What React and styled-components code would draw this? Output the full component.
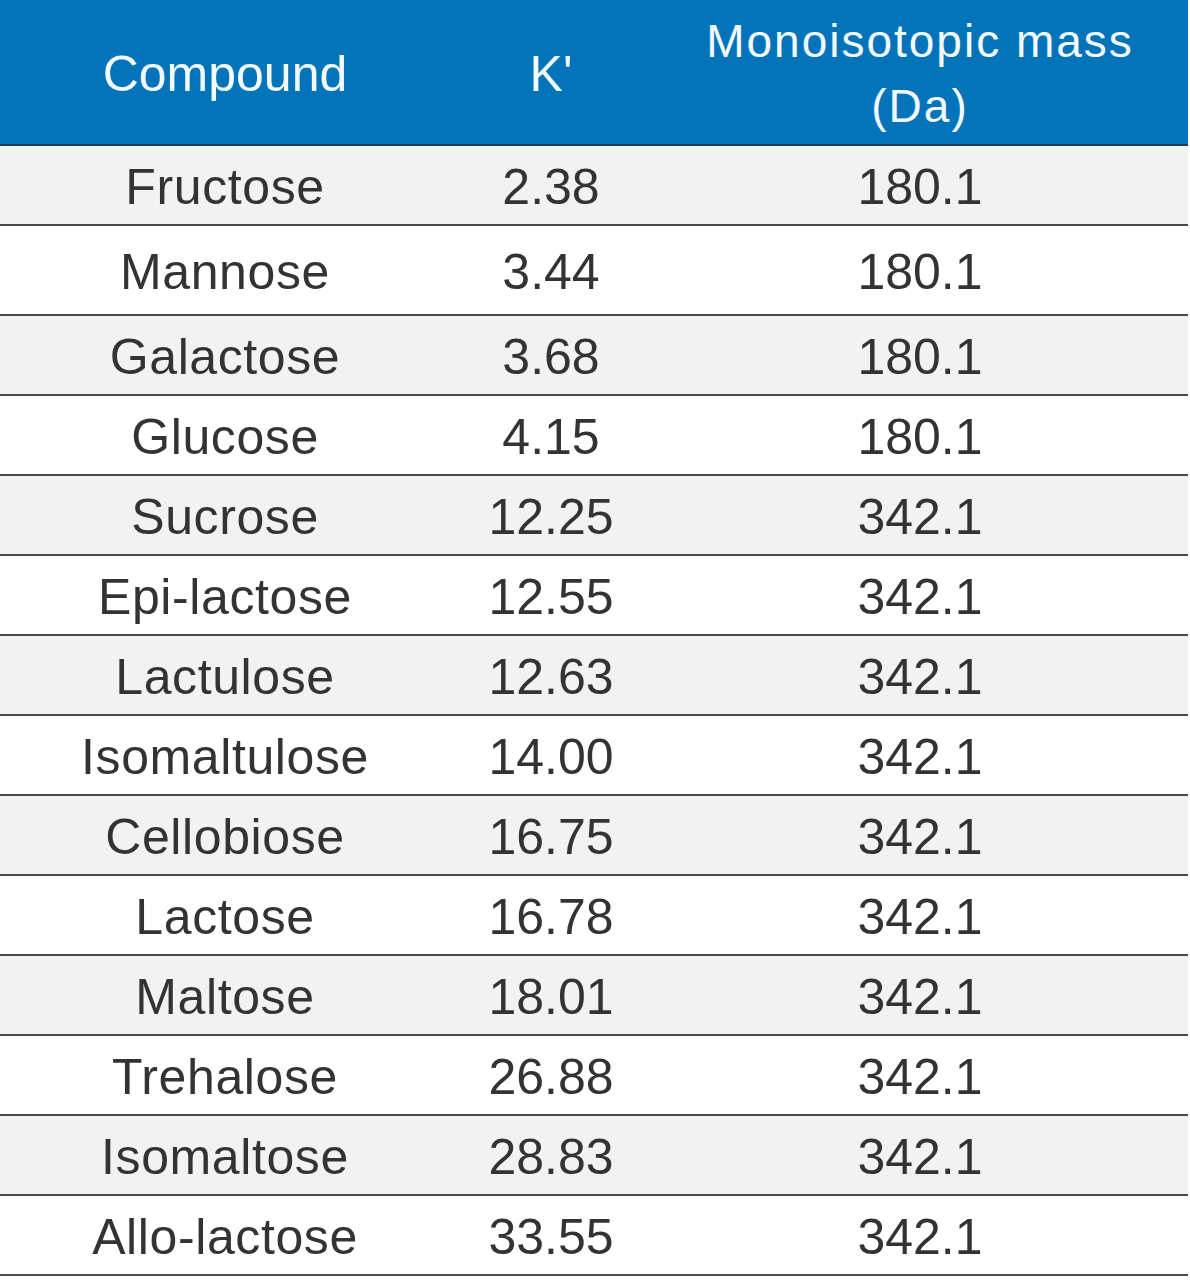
import React from "react";
import styled, { createGlobalStyle } from "styled-components";

const GlobalStyle = createGlobalStyle`
  html, body {
    margin: 0;
    padding: 0;
    background: #FFF;
  }
  body {
    font-family: "Liberation Sans", Arial, sans-serif;
  }
`

const Table = styled.table`
  width: 1188px;
  border-collapse: collapse;
  table-layout: fixed;
  font-family: "Liberation Sans", Arial, sans-serif;
`

const HeadCell = styled.th`
  height: 145px;
  padding: 3px 0 0;
  box-sizing: border-box;
  background: #0474BA;
  color: #F2FAFF;
  font-weight: normal;
  font-size: ${p => p.small ? "46px" : "50px"};
  letter-spacing: ${p => p.small ? "2px" : "0"};
  line-height: ${p => p.small ? "65px" : "60px"};
  text-align: center;
  vertical-align: middle;
  border-bottom: 2px solid #1F3A55;
`

const Row = styled.tr`
  background: ${p => p.striped ? "#F2F2F2" : "#FFF"};
`

const Cell = styled.td`
  height: ${p => p.tall ? "90px" : "80px"};
  padding: 3px 0 0;
  box-sizing: border-box;
  color: #333;
  font-size: 50px;
  line-height: 60px;
  letter-spacing: ${p => p.name ? "0.6px" : "0"};
  text-align: center;
  vertical-align: middle;
  border-bottom: 2px solid #4A4A4A;
`

const rows = [
  ["Fructose", "2.38", "180.1"],
  ["Mannose", "3.44", "180.1"],
  ["Galactose", "3.68", "180.1"],
  ["Glucose", "4.15", "180.1"],
  ["Sucrose", "12.25", "342.1"],
  ["Epi-lactose", "12.55", "342.1"],
  ["Lactulose", "12.63", "342.1"],
  ["Isomaltulose", "14.00", "342.1"],
  ["Cellobiose", "16.75", "342.1"],
  ["Lactose", "16.78", "342.1"],
  ["Maltose", "18.01", "342.1"],
  ["Trehalose", "26.88", "342.1"],
  ["Isomaltose", "28.83", "342.1"],
  ["Allo-lactose", "33.55", "342.1"],
]

const App = () => {
  return (
    <>
      <GlobalStyle />
      <Table>
        <colgroup>
          <col style={{ width: "450px" }} />
          <col style={{ width: "202px" }} />
          <col style={{ width: "536px" }} />
        </colgroup>
        <thead>
          <tr>
            <HeadCell>Compound</HeadCell>
            <HeadCell>K'</HeadCell>
            <HeadCell small>Monoisotopic mass<br />(Da)</HeadCell>
          </tr>
        </thead>
        <tbody>
          {rows.map(([name, k, mass], i) => (
            <Row key={name} striped={i % 2 === 0}>
              <Cell name tall={i === 1}>{name}</Cell>
              <Cell tall={i === 1}>{k}</Cell>
              <Cell tall={i === 1}>{mass}</Cell>
            </Row>
          ))}
        </tbody>
      </Table>
    </>
  )
}

export default App;
